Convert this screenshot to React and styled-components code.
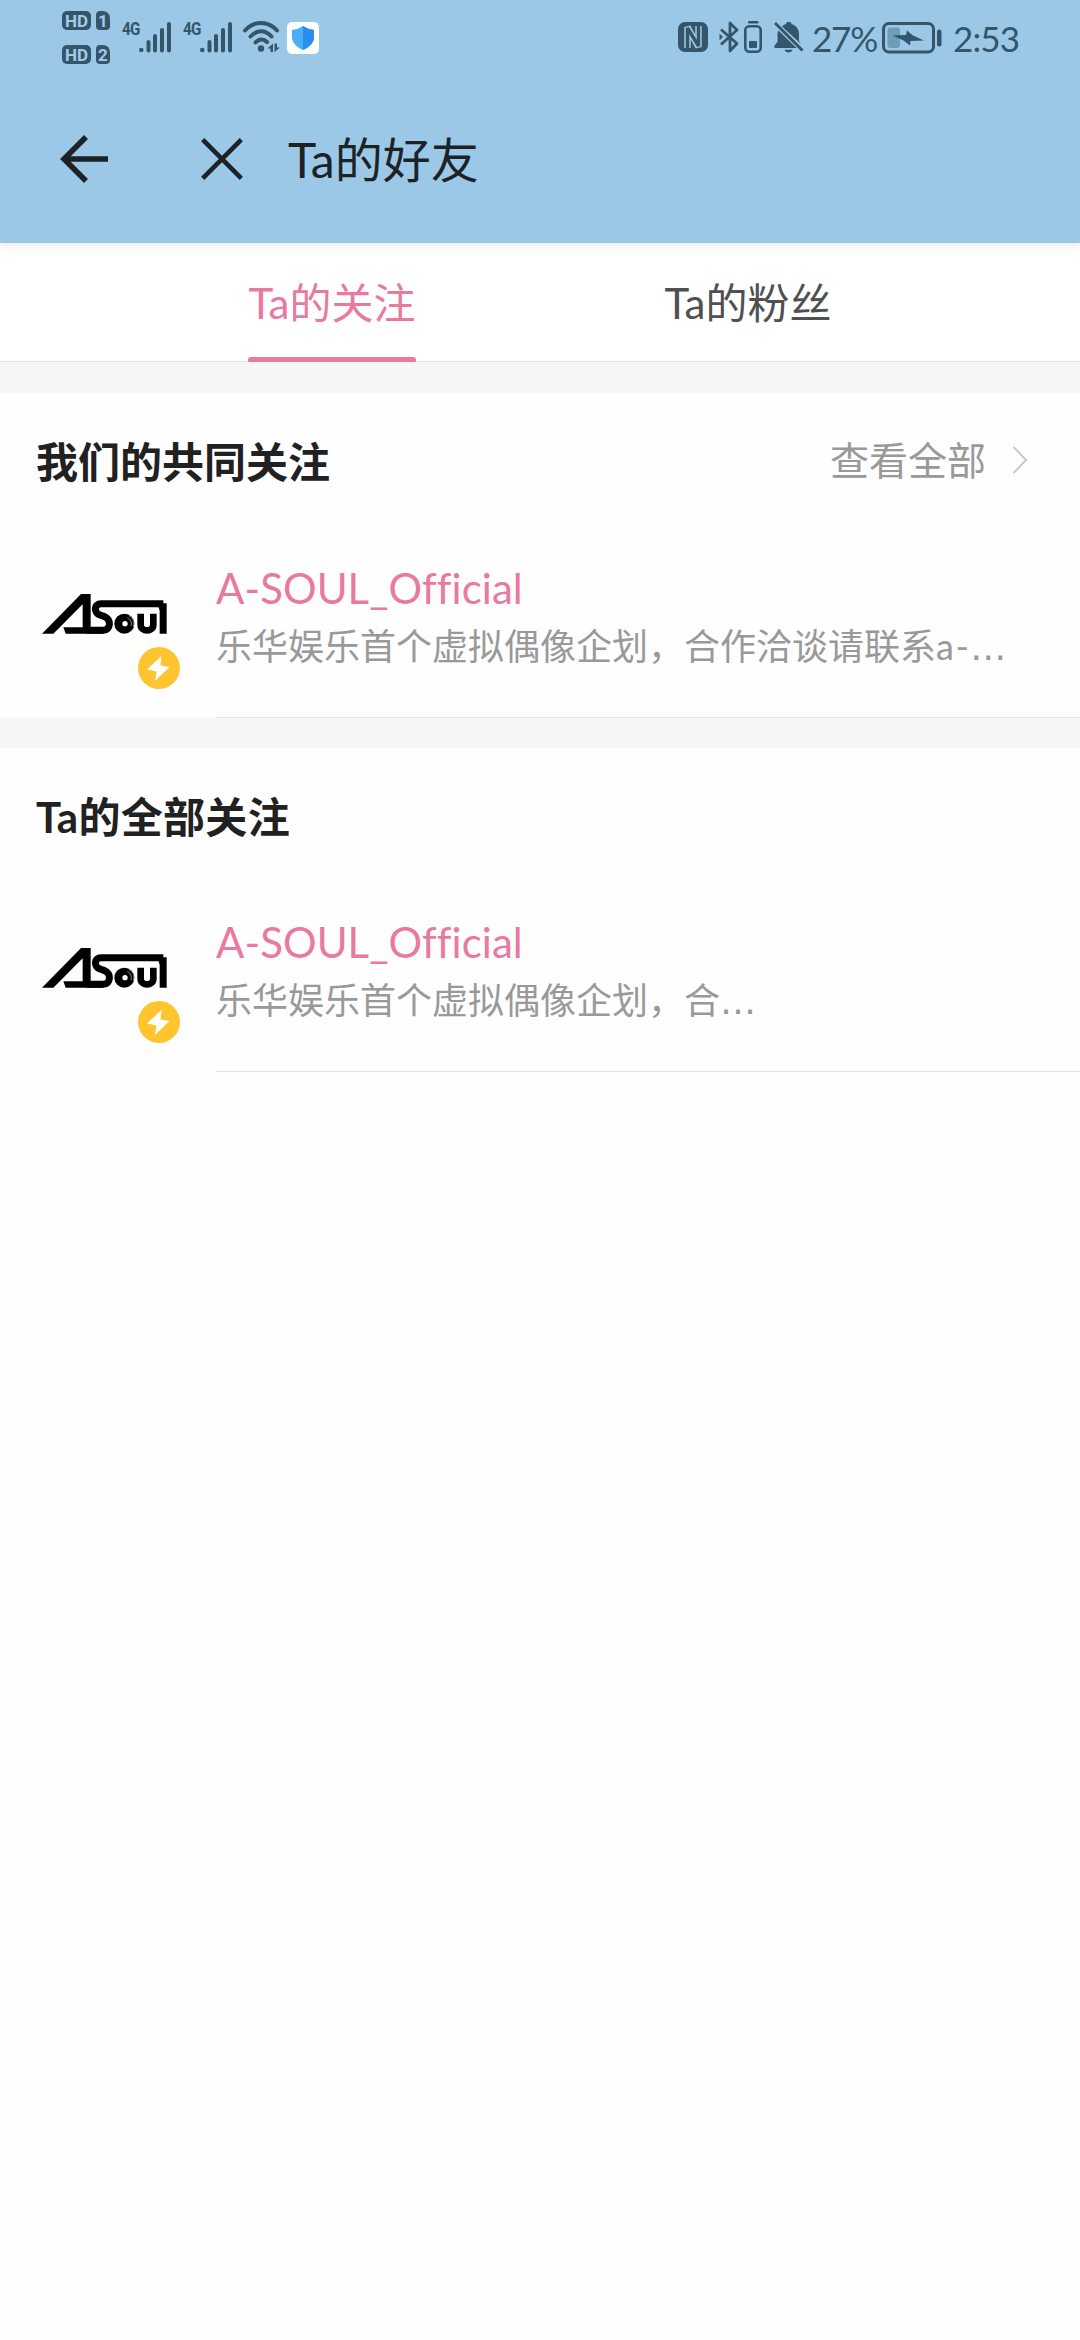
import React from "react";
import styled, { createGlobalStyle } from "styled-components";

const INK = "#35566a";

const GlobalStyle = createGlobalStyle`
  * { box-sizing: border-box; }
  body {
    margin: 0;
    background: #fefefe;
    font-family: Lato, "Noto Sans CJK SC", sans-serif;
  }
`;

const Screen = styled.div`
  position: relative;
  display: flex;
  flex-direction: column;
  width: 1080px;
  height: 2340px;
  overflow: hidden;
  background: #fefefe;
`;

const Header = styled.header`
  display: flex;
  flex-direction: column;
  height: 243px;
  flex: none;
  background: #9bc8e6;
  box-shadow: 0 2px 9px rgba(40, 50, 100, 0.12);
  z-index: 1;
`;

const StatusBar = styled.div`
  display: flex;
  align-items: flex-start;
  justify-content: space-between;
  height: 76px;
  padding: 11px 60px 0 62px;
  color: ${INK};
`;

const StatusGroup = styled.div`
  display: flex;
  align-items: flex-start;
  height: 54px;
`;

const StatusSlot = styled.div`
  display: flex;
  margin-left: ${(p) => p.$gap || 0}px;
  margin-top: ${(p) => p.$drop || 0}px;
  svg { display: block; }
`;

const SimStack = styled.div`
  display: flex;
  flex-direction: column;
  gap: 15px;
`;

const SimRow = styled.div`
  display: flex;
  gap: 5px;
`;

const SimTag = styled.span`
  width: ${(p) => p.$w}px;
  height: 19px;
  border-radius: ${(p) => p.$radius};
  background: ${INK};
  color: #a3cbe5;
  font: 700 17px/20px Roboto, sans-serif;
  text-align: center;
`;

const NetLabel = styled.span`
  width: 17px;
  font: 700 19px/20px "Roboto", sans-serif;
  letter-spacing: -1px;
  transform: scaleX(0.8);
  transform-origin: left;
  white-space: nowrap;
`;

const StatusText = styled.span`
  width: ${(p) => p.$w}px;
  margin-left: ${(p) => p.$gap}px;
  font-size: 35px;
  line-height: 54px;
  letter-spacing: ${(p) => p.$track || 0}px;
  white-space: nowrap;
`;

const NavBar = styled.div`
  display: flex;
  align-items: center;
  height: 166px;
  padding: 0 0 0 60px;
  color: #1d2226;
  svg { display: block; }
`;

const NavButton = styled.button`
  display: flex;
  width: ${(p) => p.$w}px;
  padding: 0;
  border: 0;
  background: none;
  color: inherit;
`;

const Title = styled.h1`
  margin: 2px 0 0;
  font-size: 48px;
  font-weight: 400;
  line-height: 60px;
`;

const Tabs = styled.nav`
  display: flex;
  flex: none;
  justify-content: center;
  height: 119px;
  border-bottom: 1px solid #e5e5e5;
  background: #fff;
`;

const TabCell = styled.div`
  display: flex;
  justify-content: center;
  width: 416px;
`;

const Tab = styled.div`
  display: flex;
  flex-direction: column;
  justify-content: space-between;
  align-items: center;
  width: 168px;
  height: 120px;
  padding-top: 30px;
  font-size: 42px;
  line-height: 60px;
  white-space: nowrap;
  color: ${(p) => (p.$active ? "#ea799f" : "#505050")};
  &::after {
    content: "";
    width: 168px;
    height: 6px;
    border-radius: 3px;
    background: ${(p) => (p.$active ? "#ea799f" : "transparent")};
  }
`;

const Gap = styled.div`
  flex: none;
  height: ${(p) => p.$h}px;
  background: #f6f6f6;
`;

const Section = styled.section`
  flex: none;
  background: #fefefe;
`;

const SectionHead = styled.div`
  display: flex;
  align-items: center;
  justify-content: space-between;
  height: ${(p) => p.$h}px;
  padding: 0 52px 3px 36px;
`;

const SectionTitle = styled.h2`
  margin: 0;
  color: #212121;
  font-size: 42px;
  font-weight: 700;
  line-height: 60px;
  letter-spacing: ${(p) => p.$track || 0}px;
`;

const More = styled.div`
  display: flex;
  align-items: center;
  gap: 26px;
  margin-bottom: 4px;
  color: #999;
  font-size: 39px;
  line-height: 60px;
  svg { display: block; }
`;

const UserRow = styled.article`
  display: flex;
  height: 184px;
`;

const AvatarBox = styled.div`
  position: relative;
  width: 216px;
  flex: none;
  padding: 58px 0 0 40px;
  svg { display: block; }
`;

const Badge = styled.div`
  position: absolute;
  left: 138px;
  top: 113px;
`;

const UserInfo = styled.div`
  flex: 1;
  min-width: 0;
  padding-top: 26px;
  border-bottom: 1px solid #e5e5e5;
`;

const Name = styled.div`
  color: #ea799f;
  font-size: 42px;
  line-height: 56px;
  letter-spacing: ${(p) => p.$track}px;
  white-space: nowrap;
`;

const Bio = styled.div`
  color: #999;
  font-size: 36px;
  line-height: 60px;
  white-space: nowrap;
`;

const Latin = styled.span`
  letter-spacing: 1.5px;
`;

const Dots = styled.span`
  font-family: "DejaVu Sans", sans-serif;
  line-height: 1;
`;

const Signal = () => (
  <svg width="34" height="32" viewBox="0 0 34 32" fill={INK}>
    <circle cx="2.3" cy="29" r="2.3" />
    <rect x="7.5" y="19" width="4" height="12.5" rx="2" />
    <rect x="14" y="13" width="4" height="18.5" rx="2" />
    <rect x="21" y="7" width="4" height="24.5" rx="2" />
    <rect x="28" y="1" width="4" height="30.5" rx="2" />
  </svg>
);

const Wifi = () => (
  <svg width="38" height="32" viewBox="0 0 38 32" fill="none" stroke={INK} strokeWidth="4" strokeLinecap="round">
    <path d="M2 9.5C11-.5 25-.5 34 9.500" />
    <path d="M7.500 15.500C14 8.500 22 8.500 28.500 15.500" />
    <path d="M12.500 21.500C16 17.500 20.500 17.500 24 21" />
    <circle cx="18" cy="27.500" r="3.200" fill={INK} stroke="none" />
    <path d="M24.500 27.500L30 22.500V31H27.500V27.500ZM37 26.500L31.500 31V22.500H34V26.500Z" fill={INK} stroke="none" />
  </svg>
);

const Shield = () => (
  <svg width="32" height="32" viewBox="0 0 32 32">
    <rect width="32" height="32" rx="5" fill="#fff" />
    <path d="M16 4Q21 7.500 27 8V15C27 21 22 25.500 16 28C10 25.500 5 21 5 15V8Q11 7.500 16 4Z" fill="#48aef9" />
    <path d="M16 4Q21 7.500 27 8V15C27 21 22 25.500 16 28Z" fill="#2a8def" />
  </svg>
);

const Nfc = () => (
  <svg width="30" height="30" viewBox="0 0 30 30">
    <rect width="30" height="30" rx="7" fill={INK} />
    <path d="M9.500 26V5L20.500 25V4" fill="none" stroke="#9bc8e6" strokeWidth="6.500" strokeLinejoin="bevel" />
    <path d="M9.500 29V6L20.500 24V1" fill="none" stroke={INK} strokeWidth="3.400" strokeLinejoin="bevel" />
  </svg>
);

const Bluetooth = () => (
  <svg width="20" height="32" viewBox="0 0 20 32" fill="none" stroke={INK} strokeWidth="2.800" strokeLinejoin="round">
    <path d="M2 8.500L18 22.500L11 30V2L18 9L2 23.500" />
    <path d="M.5 12.500L4 16L.5 19.500Z" fill={INK} stroke="none" />
  </svg>
);

const MiniBattery = () => (
  <svg width="18" height="32" viewBox="0 0 18 32" fill={INK}>
    <rect x="4" y="0" width="10.500" height="2.600" rx="1" />
    <rect x="1.300" y="5.300" width="15.400" height="25.400" rx="4" fill="none" stroke={INK} strokeWidth="2.600" />
    <rect x="5" y="20" width="8" height="7" rx="1" />
  </svg>
);

const BellOff = () => (
  <svg width="30" height="32" viewBox="0 0 30 32" fill={INK}>
    <path d="M8 5.500C9.500 4 11 3.400 12 3C12 0 17.500 0 17.500 3C22 4.500 25 8 25 13V20L27 23Z" />
    <path d="M4.500 9.500L22.500 27H0.500V24.500L3.500 21V13C3.500 11.500 4 10.500 4.500 9.500Z" />
    <path d="M10.500 28.800H18.500C17.500 32.500 11.500 32.500 10.500 28.800Z" />
    <path d="M1 2L28.500 29.500" stroke={INK} strokeWidth="3" />
  </svg>
);

const Battery = () => (
  <svg width="60" height="32" viewBox="0 0 60 32">
    <rect x="1.500" y="1.500" width="50" height="28.500" rx="5.500" fill="none" stroke={INK} strokeWidth="3" />
    <rect x="5.500" y="5.500" width="12.500" height="20.500" rx="3" fill="#6f9cb8" />
    <path d="M10.500 13.500L24 13L25 8.500L31 13.500L42 18.500L28.500 19L28 23.500L21.500 18.500Z" fill={INK} />
    <rect x="55" y="7.500" width="4.500" height="17" rx="2" fill={INK} />
  </svg>
);

const BackArrow = () => (
  <svg width="48" height="48" viewBox="0 0 48 48" fill="none" stroke="currentColor" strokeWidth="5.600">
    <path d="M26 2L4 24L26 46M4 24H48" />
  </svg>
);

const CloseIcon = () => (
  <svg width="42" height="42" viewBox="0 0 42 42" fill="none" stroke="currentColor" strokeWidth="4.600">
    <path d="M1.700 1.700L40.300 40.300M40.300 1.700L1.700 40.300" />
  </svg>
);

const Chevron = () => (
  <svg width="16" height="28" viewBox="0 0 16 28" fill="none" stroke="#c9c9c9" strokeWidth="2">
    <path d="M1.500 1L14 14L1.500 27" />
  </svg>
);

const Logo = () => (
  <svg width="128" height="44" viewBox="60 66 384 132" fill="#000">
    <path d="M66 191L183 72H212V172H250V191H137L130 172H188V103L100 191Z" />
    <path d="M430 101H243C222 101 220 128 240 135L252 139C276 147 272 181 250 181H200" fill="none" stroke="#000" strokeWidth="21" />
    <path d="M412 100H440V191H419V122Z" />
    <circle cx="313" cy="161" r="30" />
    <circle cx="315" cy="161" r="8" fill="#fefefe" />
    <path d="M322 143C332 147 336 157 333 168M327 137C340 143 344 157 340 169" fill="none" stroke="#ccc" strokeWidth="2" />
    <path d="M362 131V164C362 187 400 187 400 164V131" fill="none" stroke="#000" strokeWidth="20" />
  </svg>
);

const Bolt = () => (
  <svg width="42" height="42" viewBox="0 0 42 42">
    <circle cx="21" cy="21" r="21" fill="#fec52e" />
    <path d="M23.500 9L9 22.500L18.500 24.500L17 34L31.500 20L22.500 18.500Z" fill="#fff" />
  </svg>
);

const Watermark = styled.div`
  position: absolute;
  left: 887px;
  top: 2296px;
  width: 32px;
  height: 32px;
  border-radius: 5px;
  background: #fdfdfd;
`;

function User({ name, bio, tail }) {
  return (
    <UserRow>
      <AvatarBox>
        <Logo />
        <Badge><Bolt /></Badge>
      </AvatarBox>
      <UserInfo>
        <Name $track={0.05}>{name}</Name>
        <Bio>{bio}{tail && <Latin>{tail}</Latin>}<Dots>…</Dots></Bio>
      </UserInfo>
    </UserRow>
  );
}

export default function App() {
  return (
    <>
      <GlobalStyle />
      <Screen>
        <Header>
          <StatusBar>
            <StatusGroup>
              <SimStack>
                {["1", "2"].map((n) => (
                  <SimRow key={n}>
                    <SimTag $w={29} $radius="5px">HD</SimTag>
                    <SimTag $w={14} $radius="4px 7px 4px 4px">{n}</SimTag>
                  </SimRow>
                ))}
              </SimStack>
              <StatusSlot $gap={12} $drop={8}><NetLabel>4G</NetLabel></StatusSlot>
              <StatusSlot $drop={10}><Signal /></StatusSlot>
              <StatusSlot $gap={10} $drop={8}><NetLabel>4G</NetLabel></StatusSlot>
              <StatusSlot $drop={10}><Signal /></StatusSlot>
              <StatusSlot $gap={9} $drop={10}><Wifi /></StatusSlot>
              <StatusSlot $gap={6} $drop={11}><Shield /></StatusSlot>
            </StatusGroup>
            <StatusGroup>
              <StatusSlot $drop={11}><Nfc /></StatusSlot>
              <StatusSlot $gap={11} $drop={10}><Bluetooth /></StatusSlot>
              <StatusSlot $gap={5} $drop={10}><MiniBattery /></StatusSlot>
              <StatusSlot $gap={12} $drop={10}><BellOff /></StatusSlot>
              <StatusText $gap={8} $w={64} $track={-1.2}>27%</StatusText>
              <StatusSlot $gap={6} $drop={11}><Battery /></StatusSlot>
              <StatusText $gap={11} $w={67} $track={-0.9}>2:53</StatusText>
            </StatusGroup>
          </StatusBar>
          <NavBar>
            <NavButton $w={141} aria-label="返回"><BackArrow /></NavButton>
            <NavButton $w={87} aria-label="关闭"><CloseIcon /></NavButton>
            <Title>Ta的好友</Title>
          </NavBar>
        </Header>
        <Tabs>
          <TabCell><Tab $active>Ta的关注</Tab></TabCell>
          <TabCell><Tab>Ta的粉丝</Tab></TabCell>
        </Tabs>
        <Gap $h={31} />
        <Section>
          <SectionHead $h={141}>
            <SectionTitle>我们的共同关注</SectionTitle>
            <More>查看全部<Chevron /></More>
          </SectionHead>
          <User name="A-SOUL_Official" bio="乐华娱乐首个虚拟偶像企划，合作洽谈请联系" tail="a-" />
        </Section>
        <Gap $h={30} />
        <Section>
          <SectionHead $h={140}>
            <SectionTitle $track={0.3}>Ta的全部关注</SectionTitle>
          </SectionHead>
          <User name="A-SOUL_Official" bio="乐华娱乐首个虚拟偶像企划，合" />
        </Section>
        <Watermark />
      </Screen>
    </>
  );
}
